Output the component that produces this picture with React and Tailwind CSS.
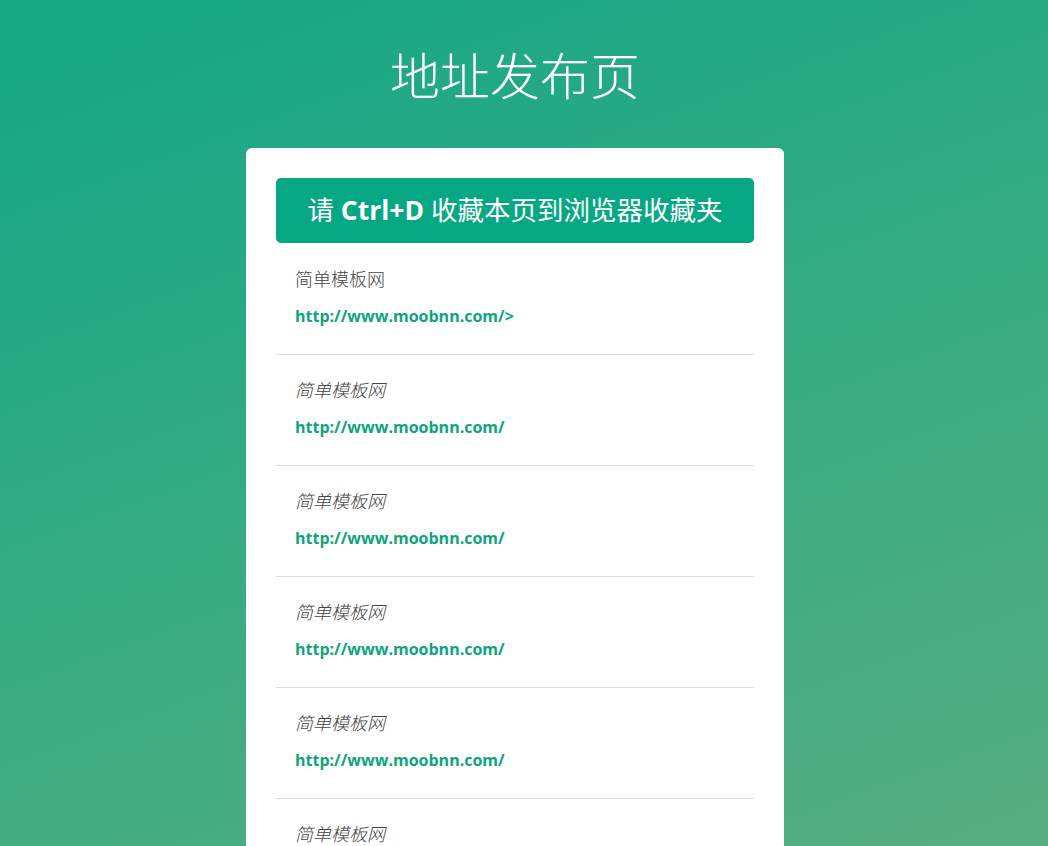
export default function App() {
  const items = [
    { name: "简单模板网", url: "http://www.moobnn.com/>", italic: false },
    { name: "简单模板网", url: "http://www.moobnn.com/", italic: true },
    { name: "简单模板网", url: "http://www.moobnn.com/", italic: true },
    { name: "简单模板网", url: "http://www.moobnn.com/", italic: true },
    { name: "简单模板网", url: "http://www.moobnn.com/", italic: true },
    { name: "简单模板网", url: "http://www.moobnn.com/", italic: true },
  ];
  return (
    <div
      className="h-[846px] w-full overflow-hidden bg-[linear-gradient(160deg,#13a883,#58ae82)]"
      style={{ fontFamily: '"Open Sans", "Noto Sans CJK SC", sans-serif' }}
    >
      <div className="w-[1030px]">
        <h1 className="pt-[39px] text-center text-[50px] leading-[75px] font-light text-white">
          地址发布页
        </h1>
        <div className="mx-auto mt-[34px] w-[538px] rounded-md bg-white px-[30px] pt-[30px] pb-4">
          <div className="flex h-[65px] items-center justify-center rounded-[5px] bg-[#05a882] text-[26.5px] text-white">
            <span>
              请 <b className="font-bold">Ctrl+D</b> 收藏本页到浏览器收藏夹
            </span>
          </div>
          <div className="mt-px">
            {items.map((it, i) => (
              <div key={i} className="border-b border-[#dddddd] pl-[19px] pr-5 pt-[17px] pb-[19px]">
                <div className={`text-[18px] leading-[36px] text-[#444444] font-light ${it.italic ? "italic" : ""}`}>
                  {it.name}
                </div>
                <div className="text-[16px] leading-[38px] font-bold text-[#0ea47e]">{it.url}</div>
              </div>
            ))}
          </div>
        </div>
      </div>
    </div>
  );
}
